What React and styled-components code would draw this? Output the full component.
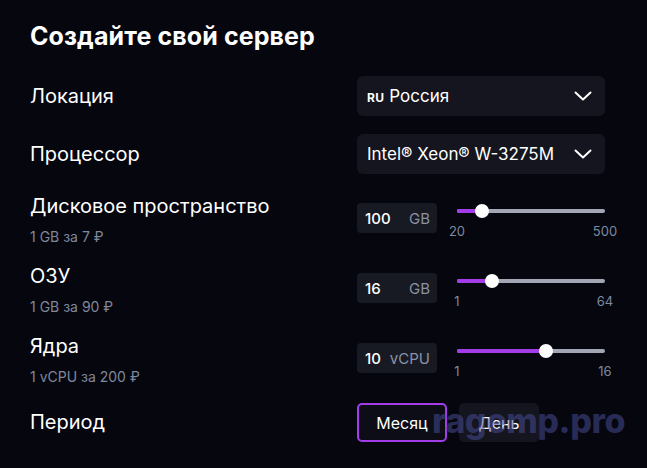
import styled, { createGlobalStyle } from "styled-components";

const GlobalStyle = createGlobalStyle`
  html, body {
    margin: 0;
    padding: 0;
    background: #05060e;
  }
  body {
    font-family: Inter, "Noto Sans", sans-serif;
    color: #ffffff;
  }
`;

const Page = styled.div`
  position: relative;
  width: 647px;
  height: 468px;
  overflow: hidden;
  padding: 22px 0 0 30px;
  box-sizing: border-box;
  background: #05060e;
`;

const Title = styled.h1`
  margin: 0 0 26px;
  font-size: 25px;
  line-height: 28px;
  font-weight: 700;
  letter-spacing: 0.1px;
`;

const Rows = styled.div`
  display: flex;
  flex-direction: column;
  gap: ${(p) => p.$gap || 18}px;
`;

const Row = styled.div`
  display: grid;
  grid-template-columns: 327px 248px;
  align-items: ${(p) => (p.$top ? "start" : "center")};
  min-height: ${(p) => p.$h || 40}px;
  margin-top: ${(p) => p.$mt || 0}px;
`;

const LabelBlock = styled.div`
  display: flex;
  flex-direction: column;
  gap: 11px;
`;

const Label = styled.div`
  font-size: 20px;
  line-height: 23px;
  font-weight: 400;
`;

const Sub = styled.div`
  font-size: 14px;
  line-height: 16px;
  color: #7f889b;
`;

const Select = styled.div`
  display: flex;
  align-items: center;
  justify-content: space-between;
  height: 40px;
  padding: 0 13px 0 10px;
  border-radius: 6px;
  background: #14151e;
  font-size: 17px;
`;

const SelectValue = styled.span`
  display: flex;
  align-items: baseline;
  gap: 5px;
`;

const Flag = styled.span`
  font-size: 12px;
  font-weight: 700;
  letter-spacing: 0.3px;
`;

const Controls = styled.div`
  display: flex;
  align-items: flex-start;
  gap: 20px;
  margin-top: ${(p) => p.$mt || 0}px;
`;

const NumberBox = styled.div`
  display: flex;
  align-items: center;
  justify-content: space-between;
  width: 80px;
  height: 30px;
  padding: 0 7px 0 8px;
  box-sizing: border-box;
  border-radius: 4px;
  background: #181a23;
  font-size: 15px;
`;

const Value = styled.span`
  font-weight: 500;
  color: #ffffff;
`;

const Unit = styled.span`
  color: #8a92a3;
`;

const SliderWrap = styled.div`
  width: 148px;
  display: flex;
  flex-direction: column;
`;

const TrackArea = styled.div`
  position: relative;
  height: 16px;
  display: flex;
  align-items: center;
`;

const Track = styled.div`
  width: 100%;
  height: 4px;
  border-radius: 2px;
  background: #a3a6b5;
  overflow: hidden;
`;

const Fill = styled.div`
  height: 100%;
  background: #a33ce9;
`;

const Thumb = styled.div`
  position: absolute;
  top: 1px;
  width: 14px;
  height: 14px;
  margin-left: -7px;
  border-radius: 50%;
  background: #ffffff;
`;

const Range = styled.div`
  display: flex;
  justify-content: space-between;
  margin: 5px -16px 0;
  font-size: 13px;
  line-height: 14px;
  color: #7d8aa0;

  span {
    width: 32px;
    text-align: center;
  }
`;

const Periods = styled.div`
  display: flex;
  gap: 12px;
`;

const PeriodButton = styled.div`
  display: flex;
  align-items: center;
  justify-content: center;
  width: ${(p) => p.$w}px;
  height: 39px;
  box-sizing: border-box;
  border-radius: 5px;
  font-size: 16px;
  background: ${(p) => (p.$active ? "#0c0d16" : "#14151e")};
  border: 2px solid ${(p) => (p.$active ? "#a33ce9" : "transparent")};
`;

const Watermark = styled.div`
  position: absolute;
  left: 432px;
  top: 401px;
  font-size: 34px;
  line-height: 40px;
  font-weight: 800;
  letter-spacing: -0.4px;
  color: rgba(72, 76, 150, 0.55);
  pointer-events: none;
`;

function Chevron() {
  return (
    <svg width="18" height="10" viewBox="0 0 18 10" fill="none">
      <path d="M1.5 1.5 L9 8.5 L16.5 1.5" stroke="#fff" strokeWidth="2" strokeLinecap="round" strokeLinejoin="round" />
    </svg>
  );
}

function Slider({ min, max, value }) {
  const pct = ((value - min) / (max - min)) * 100;
  return (
    <SliderWrap>
      <TrackArea>
        <Track>
          <Fill style={{ width: `${pct}%` }} />
        </Track>
        <Thumb style={{ left: `${pct}%` }} />
      </TrackArea>
      <Range>
        <span>{min}</span>
        <span>{max}</span>
      </Range>
    </SliderWrap>
  );
}

const resources = [
  { label: "Дисковое пространство", sub: "1 GB за 7 ₽", value: 100, unit: "GB", min: 20, max: 500 },
  { label: "ОЗУ", sub: "1 GB за 90 ₽", value: 16, unit: "GB", min: 1, max: 64 },
  { label: "Ядра", sub: "1 vCPU за 200 ₽", value: 10, unit: "vCPU", min: 1, max: 16 },
];

export default function App() {
  return (
    <Page>
      <GlobalStyle />
      <Title>Создайте свой сервер</Title>
      <Rows>
        <Row>
          <Label>Локация</Label>
          <Select>
            <SelectValue>
              <Flag>RU</Flag>
              Россия
            </SelectValue>
            <Chevron />
          </Select>
        </Row>
        <Row>
          <Label>Процессор</Label>
          <Select>
            <SelectValue>Intel® Xeon® W-3275M</SelectValue>
            <Chevron />
          </Select>
        </Row>
      </Rows>
      <Rows $gap={20}>
        {resources.map((r, i) => (
          <Row key={r.label} $top $h={50} $mt={i === 0 ? 21 : 0}>
            <LabelBlock>
              <Label>{r.label}</Label>
              <Sub>{r.sub}</Sub>
            </LabelBlock>
            <Controls $mt={8}>
              <NumberBox>
                <Value>{r.value}</Value>
                <Unit>{r.unit}</Unit>
              </NumberBox>
              <Slider min={r.min} max={r.max} value={r.value} />
            </Controls>
          </Row>
        ))}
        <Row $h={39} $mt={-2}>
          <Label>Период</Label>
          <Periods>
            <PeriodButton $active $w={90}>Месяц</PeriodButton>
            <PeriodButton $w={80}>День</PeriodButton>
          </Periods>
        </Row>
      </Rows>
      <Watermark>ragemp.pro</Watermark>
    </Page>
  );
}
